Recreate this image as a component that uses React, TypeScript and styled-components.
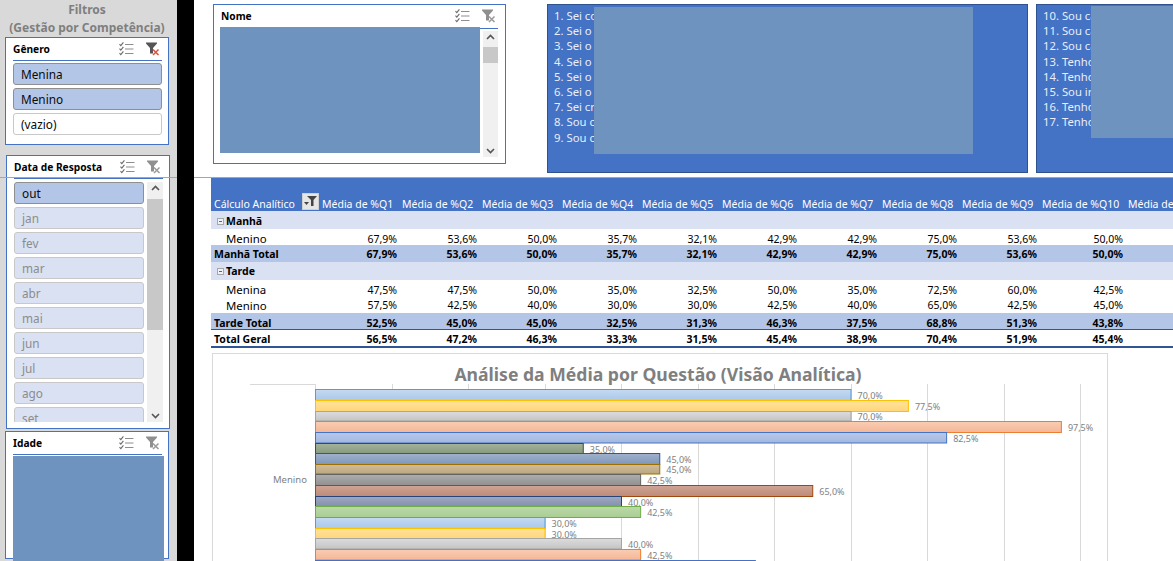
import React from "react";
import styled, { createGlobalStyle } from "styled-components";

const GlobalStyle = createGlobalStyle`
  html, body {
    margin: 0;
    padding: 0;
    background: #ffffff;
    overflow: hidden;
  }
  * {
    box-sizing: border-box;
  }
`;

const FONT = `"Noto Sans", "Open Sans", sans-serif`;

const Page = styled.div`
  position: relative;
  display: flex;
  width: 1173px;
  height: 561px;
  overflow: hidden;
  font-family: ${FONT};
  background: #ffffff;
`;

const PaneLine = styled.div`
  position: absolute;
  top: 177px;
  left: 0;
  width: 100%;
  height: 1px;
  background: #a6a6a6;
  z-index: 3;
`;

const Sidebar = styled.aside`
  width: 177px;
  flex: none;
  background: #d9d9d9;
  padding-top: 1px;
  overflow: hidden;
`;

const SidebarTitle = styled.div`
  color: #7f7f7f;
  font-size: 12px;
  font-weight: 700;
  line-height: 18px;
  text-align: center;
  width: 174px;
`;

const BlackBand = styled.div`
  position: relative;
  z-index: 4;
  width: 17px;
  flex: none;
  background: #000000;
`;

const Main = styled.main`
  flex: 1;
  min-width: 0;
  padding-top: 4px;
`;

const Slicer = styled.section<{ $left: number; $height: number; $top: number }>`
  width: 164px;
  height: ${(p) => p.$height}px;
  margin-left: ${(p) => p.$left}px;
  margin-top: ${(p) => p.$top}px;
  background: #ffffff;
  border: 1px solid #4472c4;
  padding: 0 6px 0 7px;
`;

const SlicerHead = styled.div`
  height: 23px;
  display: flex;
  align-items: center;
  border-bottom: 1px solid #4472c4;
  font-size: 10.2px;
  font-weight: 700;
  color: #000000;
`;

const SlicerName = styled.span`
  flex: 1;
`;

const HeadIcons = styled.div`
  display: flex;
  align-items: center;
  gap: 12px;
  padding-right: 2px;
`;

const ItemList = styled.div`
  display: flex;
  flex-direction: column;
  gap: 3px;
  padding-top: 2px;
`;

const DateBody = styled.div`
  display: flex;
  gap: 3px;
  height: 243px;
  padding-top: 3px;
`;

const DateList = styled(ItemList)`
  width: 130px;
  padding-top: 0;
  overflow: hidden;
  flex: none;
`;

const Item = styled.div<{ $kind: "on" | "empty" | "off" }>`
  flex: none;
  height: 22px;
  line-height: 20px;
  padding-left: 7px;
  border-radius: 3px;
  font-size: 11.8px;
  border: 1px solid ${(p) => (p.$kind === "on" ? "#8f8f8f" : "#c8c8c8")};
  background: ${(p) =>
    p.$kind === "on" ? "#b4c6e7" : p.$kind === "off" ? "#d9e1f2" : "#ffffff"};
  color: ${(p) => (p.$kind === "off" ? "#8c8c8c" : "#0a0a0a")};
`;

const Scrollbar = styled.div<{ $thumbTop: number; $thumbHeight: number }>`
  width: 16px;
  flex: none;
  background: #f0f0f0;
  display: flex;
  flex-direction: column;
  justify-content: space-between;
  align-items: center;
  padding: 3px 0;
  background-image: linear-gradient(#c8c8c8, #c8c8c8);
  background-repeat: no-repeat;
  background-position: 0 ${(p) => p.$thumbTop}px;
  background-size: 100% ${(p) => p.$thumbHeight}px;
`;

const Redaction = styled.div`
  background: #6f93bf;
`;

const IdadeBlock = styled(Redaction)`
  width: 151px;
  height: 106px;
  margin-top: 1px;
`;

const TopRow = styled.div`
  display: flex;
  align-items: flex-start;
  height: 173px;
  padding-left: 19px;
`;

const NomeCard = styled.section`
  width: 293px;
  height: 160px;
  flex: none;
  background: #ffffff;
  border: 1px solid #4472c4;
  padding: 0 7px 0 6px;
`;

const NomeHead = styled(SlicerHead)`
  height: 24px;
  padding-left: 1px;
  padding-bottom: 2px;
`;

const NomeBody = styled.div`
  display: flex;
  gap: 3px;
  height: 130px;
`;

const NomeBlock = styled(Redaction)`
  width: 260px;
  height: 126px;
  margin-top: -2px;
  flex: none;
`;

const NomeScroll = styled(Scrollbar)`
  height: 126px;
  margin-top: 2px;
  width: 15px;
`;

const Note = styled.section<{ $width: number; $left: number }>`
  position: relative;
  flex: none;
  width: ${(p) => p.$width}px;
  height: 169px;
  margin-left: ${(p) => p.$left}px;
  background: #4472c4;
  border: 1px solid #2f528f;
  padding: 3px 0 0 6px;
  overflow: hidden;
`;

const NoteLine = styled.div`
  font-size: 11.3px;
  line-height: 15.2px;
  color: #e9eef9;
  white-space: nowrap;
`;

const NoteCover = styled(Redaction)<{
  $left: number;
  $width: number;
  $top: number;
  $height: number;
}>`
  position: absolute;
  left: ${(p) => p.$left}px;
  top: ${(p) => p.$top}px;
  width: ${(p) => p.$width}px;
  height: ${(p) => p.$height}px;
`;

const Pivot = styled.div`
  width: 962px;
  margin-left: 17px;
`;

type RowKind = "head" | "group" | "item" | "total" | "grand";

const PivotRow = styled.div<{ $kind: RowKind; $height: number; $shift: number }>`
  display: grid;
  grid-template-columns: 106px repeat(9, 80px) 86px 80px;
  align-items: center;
  white-space: nowrap;
  font-size: 10.5px;
  color: ${(p) => (p.$kind === "head" ? "#ffffff" : "#000000")};
  font-weight: ${(p) => (p.$kind === "head" || p.$kind === "item" ? 400 : 700)};
  height: ${(p) => p.$height}px;
  padding-top: ${(p) => p.$shift}px;
  background: ${(p) =>
    p.$kind === "head"
      ? "#4472c4"
      : p.$kind === "group"
      ? "#d9e1f2"
      : p.$kind === "total"
      ? "#b4c6e7"
      : "#ffffff"};
  ${(p) => (p.$kind === "grand" ? "border-bottom: 2px solid #2f5597;" : "")}
`;

const TotalRule = styled.div`
  height: 1px;
  background: #2f5597;
  margin-top: -1px;
`;

const LabelCell = styled.div<{ $indent: number; $large?: boolean }>`
  display: flex;
  align-items: center;
  gap: 2px;
  padding-left: ${(p) => p.$indent}px;
  min-width: 0;
  font-size: ${(p) => (p.$large ? "11.4px" : "inherit")};
`;

const HeadLabel = styled.div`
  display: flex;
  align-items: center;
  justify-content: space-between;
  padding-left: 3px;
  margin-right: -2px;
`;

const ColHead = styled.div`
  padding-left: 5px;
`;

const ValueCell = styled.div`
  text-align: right;
`;

const CollapseBox = styled.span`
  width: 7px;
  height: 7px;
  border: 1px solid #a8a8a8;
  background: #eef1f8;
  position: relative;
  margin-left: 1px;
  &::after {
    content: "";
    position: absolute;
    left: 1px;
    right: 1px;
    top: 2px;
    height: 1px;
    background: #666666;
  }
`;

const FilterButton = styled.div`
  width: 17px;
  height: 17px;
  margin-top: -5px;
  background: #e6e6e6;
  border: 1px solid #d0d0d0;
  display: flex;
  align-items: center;
  justify-content: center;
`;

const Chart = styled.section`
  width: 896px;
  height: 220px;
  margin: 5px 0 0 18px;
  border: 1px solid #d9d9d9;
`;

const ChartTitle = styled.div`
  height: 30px;
  line-height: 40px;
  text-align: center;
  font-size: 17.6px;
  font-weight: 700;
  color: #7f7f7f;
  white-space: nowrap;
  padding-right: 4px;
`;

const ChartSvg = styled.svg`
  display: block;
`;

function MultiSelectIcon() {
  return (
    <svg width="15" height="14" viewBox="0 0 15 14" fill="none">
      {[1, 5.5, 10].map((y) => (
        <path key={y} d={`M0.5 ${y + 1.2}l1.3 1.4 2.6-3.2`} stroke="#6b6b6b" strokeWidth="1.1" />
      ))}
      {[2.5, 7, 11.5].map((y) => (
        <path key={y} d={`M6 ${y}h8.5`} stroke="#8e8e8e" strokeWidth="1" />
      ))}
    </svg>
  );
}

function ClearFilterIcon({ active }: { active?: boolean }) {
  const funnel = active ? "#555555" : "#8f8f8f";
  const cross = active ? "#e0503c" : "#9a9a9a";
  return (
    <svg width="14" height="14" viewBox="0 0 14 14" fill="none">
      <path d="M0 0.5h11v1L7 6v5.5H4V6L0 1.5z" fill={funnel} />
      <path d="M7 7.5l5.5 5.5M12.5 7.5L7 13" stroke={cross} strokeWidth="1.5" />
    </svg>
  );
}

function Chevron({ up }: { up?: boolean }) {
  return (
    <svg width="9" height="6" viewBox="0 0 9 6" fill="none">
      <path d={up ? "M1 5l3.5-3.5L8 5" : "M1 1l3.5 3.5L8 1"} stroke="#555555" strokeWidth="1.6" />
    </svg>
  );
}

function SlicerTools({ active }: { active?: boolean }) {
  return (
    <HeadIcons>
      <MultiSelectIcon />
      <ClearFilterIcon active={active} />
    </HeadIcons>
  );
}

const MONTHS = ["jan", "fev", "mar", "abr", "mai", "jun", "jul", "ago", "set"];

const HEADERS = ["Q1", "Q2", "Q3", "Q4", "Q5", "Q6", "Q7", "Q8", "Q9", "Q10", "Q11"];

const ROWS: { kind: RowKind; height: number; shift: number; label: string; values: string[] }[] = [
  { kind: "group", height: 18, shift: 2, label: "Manhã", values: [] },
  { kind: "item", height: 16, shift: 2, label: "Menino", values: ["67,9%", "53,6%", "50,0%", "35,7%", "32,1%", "42,9%", "42,9%", "75,0%", "53,6%", "50,0%"] },
  { kind: "total", height: 17, shift: 0, label: "Manhã Total", values: ["67,9%", "53,6%", "50,0%", "35,7%", "32,1%", "42,9%", "42,9%", "75,0%", "53,6%", "50,0%"] },
  { kind: "group", height: 18, shift: 0, label: "Tarde", values: [] },
  { kind: "item", height: 17, shift: 2, label: "Menina", values: ["47,5%", "47,5%", "50,0%", "35,0%", "32,5%", "50,0%", "35,0%", "72,5%", "60,0%", "42,5%"] },
  { kind: "item", height: 16, shift: 0, label: "Menino", values: ["57,5%", "42,5%", "40,0%", "30,0%", "30,0%", "42,5%", "40,0%", "65,0%", "42,5%", "45,0%"] },
  { kind: "total", height: 17, shift: 2, label: "Tarde Total", values: ["52,5%", "45,0%", "45,0%", "32,5%", "31,3%", "46,3%", "37,5%", "68,8%", "51,3%", "43,8%"] },
  { kind: "grand", height: 18, shift: 2, label: "Total Geral", values: ["56,5%", "47,2%", "46,3%", "33,3%", "31,5%", "45,4%", "38,9%", "70,4%", "51,9%", "45,4%"] },
];

const PALETTE = [
  { stroke: "#5b9bd5", top: "#c5daf1", bottom: "#a9c8e9" },
  { stroke: "#ffc000", top: "#ffe39c", bottom: "#ffd67a" },
  { stroke: "#a5a5a5", top: "#dcdcdc", bottom: "#c4c4c4" },
  { stroke: "#ed7d31", top: "#f9cdb2", bottom: "#f5b696" },
  { stroke: "#4472c4", top: "#b8c8e9", bottom: "#a2b8e0" },
  { stroke: "#375623", top: "#a3b39b", bottom: "#879a7f" },
  { stroke: "#255e91", top: "#9fb1cc", bottom: "#8097b9" },
  { stroke: "#9e6f00", top: "#cfbc9b", bottom: "#bca67d" },
  { stroke: "#636363", top: "#aeaeae", bottom: "#909090" },
  { stroke: "#9e480e", top: "#cfa596", bottom: "#bd8a78" },
  { stroke: "#264478", top: "#9ea8c2", bottom: "#8490ad" },
  { stroke: "#70ad47", top: "#bcd9a8", bottom: "#a8cd92" },
];

// top edge of each bar, in picture y minus the chart's plot origin (384)
const BARS = [
  { y: 5.5, h: 11, v: 70 },
  { y: 16.5, h: 11, v: 77.5 },
  { y: 27.5, h: 9.5, v: 70 },
  { y: 37.5, h: 11, v: 97.5 },
  { y: 48.5, h: 10.5, v: 82.5 },
  { y: 59.5, h: 10, v: 35 },
  { y: 69.5, h: 11, v: 45 },
  { y: 80.5, h: 9.5, v: 45 },
  { y: 90.5, h: 11, v: 42.5 },
  { y: 101.5, h: 11, v: 65 },
  { y: 112.5, h: 10, v: 40 },
  { y: 122.5, h: 11, v: 42.5 },
  { y: 133.5, h: 11, v: 30 },
  { y: 144.5, h: 10, v: 30 },
  { y: 154.5, h: 10.5, v: 40 },
  { y: 165.5, h: 10.5, v: 42.5 },
  { y: 176.5, h: 10, v: 57.5 },
];

const AXIS_X = 102;
const PX_PER_UNIT = 7.65;

function BarChart() {
  return (
    <ChartSvg width="894" height="188" viewBox="0 0 894 188">
      <defs>
        {PALETTE.map((p, i) => (
          <linearGradient key={i} id={`bar${i}`} x1="0" y1="0" x2="0" y2="1">
            <stop offset="0" stopColor={p.top} />
            <stop offset="1" stopColor={p.bottom} />
          </linearGradient>
        ))}
      </defs>
      <path d={`M37 0.5H${AXIS_X}`} stroke="#d9d9d9" />
      {Array.from({ length: 11 }, (_, i) => {
        const x = Math.round(AXIS_X + i * 76.5) + 0.5;
        return <path key={i} d={`M${x} 0V188`} stroke="#d9d9d9" />;
      })}
      {BARS.map((b, i) => {
        const p = PALETTE[i % PALETTE.length];
        const w = b.v * PX_PER_UNIT;
        return (
          <g key={i}>
            <rect
              x={AXIS_X + 0.5}
              y={b.y}
              width={w}
              height={b.h}
              fill={`url(#bar${i % PALETTE.length})`}
              stroke={p.stroke}
            />
            <text
              x={AXIS_X + w + 7}
              y={b.y + b.h / 2 + 4}
              fontSize="9"
              fill="#7f7f7f"
              fontFamily={FONT}
            >
              {b.v.toFixed(1).replace(".", ",")}%
            </text>
          </g>
        );
      })}
      <text x="60" y="99" fontSize="9.5" fill="#7f7f7f" fontFamily={FONT}>
        Menino
      </text>
    </ChartSvg>
  );
}

const NOTE_A = ["1. Sei co", "2. Sei o", "3. Sei o", "4. Sei o", "5. Sei o", "6. Sei o", "7. Sei cr", "8. Sou c", "9. Sou c"];
const NOTE_B = ["10. Sou ca", "11. Sou ca", "12. Sou ca", "13. Tenho", "14. Tenho", "15. Sou ir", "16. Tenho", "17. Tenho"];

export default function App() {
  return (
    <Page>
      <GlobalStyle />
      <PaneLine />
      <Sidebar>
        <SidebarTitle>
          Filtros
          <br />
          (Gestão por Competência)
        </SidebarTitle>
        <Slicer $left={5} $height={108} $top={0}>
          <SlicerHead>
            <SlicerName>Gênero</SlicerName>
            <SlicerTools active />
          </SlicerHead>
          <ItemList>
            <Item $kind="on">Menina</Item>
            <Item $kind="on">Menino</Item>
            <Item $kind="empty">(vazio)</Item>
          </ItemList>
        </Slicer>
        <Slicer $left={6} $height={274} $top={10}>
          <SlicerHead>
            <SlicerName>Data de Resposta</SlicerName>
            <SlicerTools />
          </SlicerHead>
          <DateBody>
            <DateList>
              <Item $kind="on">out</Item>
              {MONTHS.map((m) => (
                <Item key={m} $kind="off">
                  {m}
                </Item>
              ))}
            </DateList>
            <Scrollbar $thumbTop={17} $thumbHeight={131}>
              <Chevron up />
              <Chevron />
            </Scrollbar>
          </DateBody>
        </Slicer>
        <Slicer $left={5} $height={128} $top={2}>
          <SlicerHead>
            <SlicerName>Idade</SlicerName>
            <SlicerTools />
          </SlicerHead>
          <IdadeBlock />
        </Slicer>
      </Sidebar>
      <BlackBand />
      <Main>
        <TopRow>
          <NomeCard>
            <NomeHead>
              <SlicerName>Nome</SlicerName>
              <SlicerTools />
            </NomeHead>
            <NomeBody>
              <NomeBlock />
              <NomeScroll $thumbTop={16} $thumbHeight={16}>
                <Chevron up />
                <Chevron />
              </NomeScroll>
            </NomeBody>
          </NomeCard>
          <Note $width={481} $left={41}>
            {NOTE_A.map((l) => (
              <NoteLine key={l}>{l}</NoteLine>
            ))}
            <NoteCover $left={46} $top={2} $width={379} $height={147} />
          </Note>
          <Note $width={160} $left={8}>
            {NOTE_B.map((l) => (
              <NoteLine key={l}>{l}</NoteLine>
            ))}
            <NoteCover $left={54} $top={1} $width={110} $height={132} />
          </Note>
        </TopRow>
        <Pivot>
          <PivotRow $kind="head" $height={34} $shift={20}>
            <HeadLabel>
              Cálculo Analítico
              <FilterButton>
                <svg width="13" height="11" viewBox="0 0 13 11">
                  <path d="M3 0h10L9.5 4v6H7V4z" fill="#444444" />
                  <path d="M0 6h5L2.5 9z" fill="#444444" />
                </svg>
              </FilterButton>
            </HeadLabel>
            {HEADERS.map((h) => (
              <ColHead key={h}>Média de %{h}</ColHead>
            ))}
          </PivotRow>
          {ROWS.map((r, i) => (
            <React.Fragment key={i}>
              <PivotRow $kind={r.kind} $height={r.height} $shift={r.shift}>
                <LabelCell
                  $indent={r.kind === "item" ? 15 : r.kind === "group" ? 5 : 3}
                  $large={r.kind === "item"}
                >
                  {r.kind === "group" && <CollapseBox />}
                  {r.label}
                </LabelCell>
                {r.values.map((v, j) => (
                  <ValueCell key={j}>{v}</ValueCell>
                ))}
              </PivotRow>
              {r.label === "Tarde Total" && <TotalRule />}
            </React.Fragment>
          ))}
        </Pivot>
        <Chart>
          <ChartTitle>Análise da Média por Questão (Visão Analítica)</ChartTitle>
          <BarChart />
        </Chart>
      </Main>
    </Page>
  );
}
